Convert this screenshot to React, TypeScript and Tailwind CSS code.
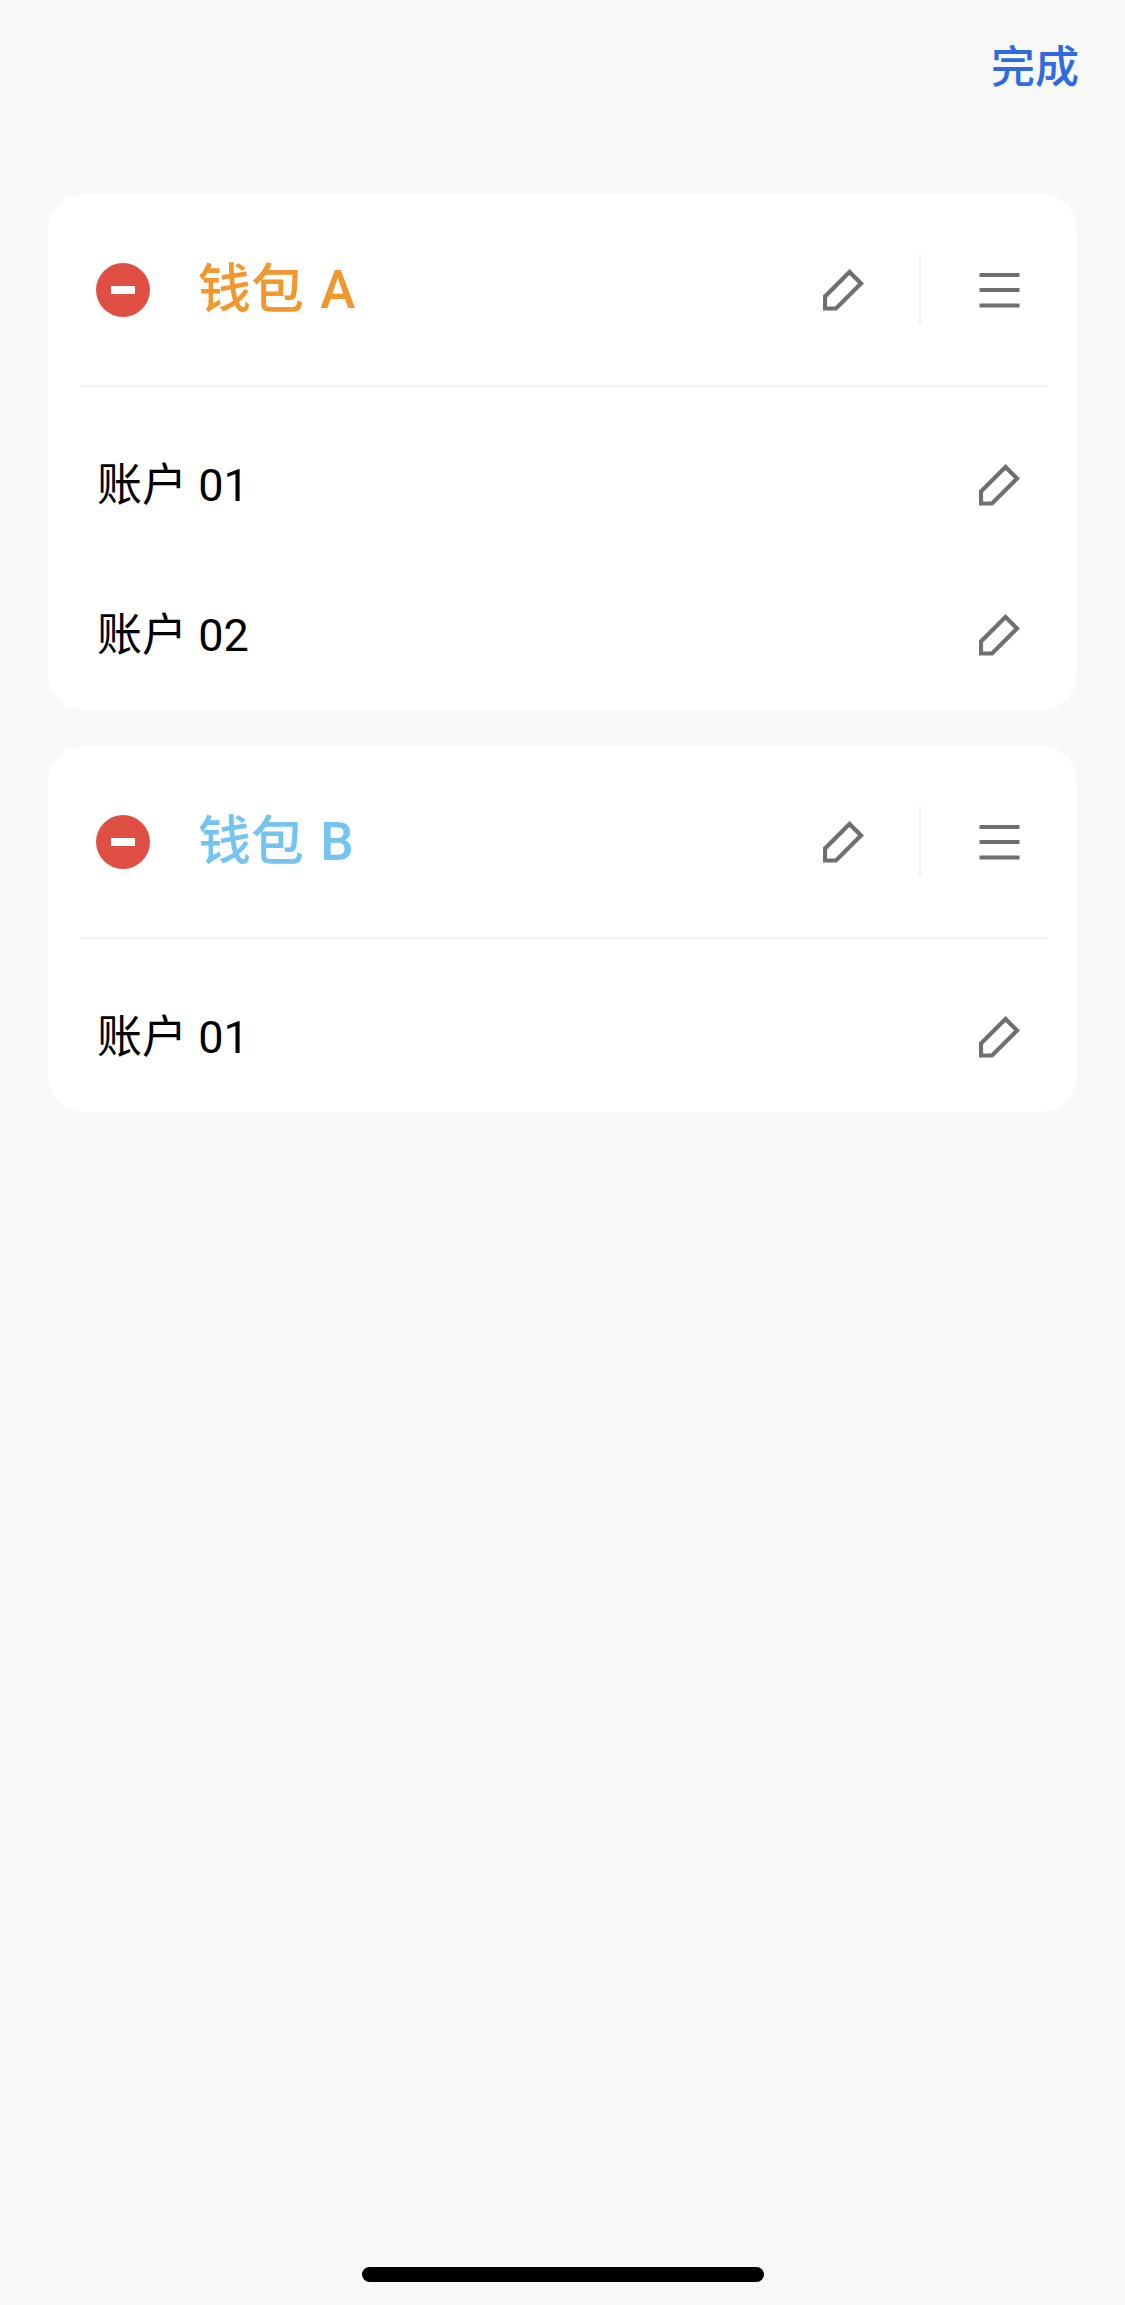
const FONT = "font-['Roboto','Noto_Sans_CJK_SC',sans-serif]";

function Pencil() {
  return (
    <svg width="41" height="42" viewBox="0 0 41 42" fill="none" className="block shrink-0">
      <path d="M2 39.5V27.5L26.5 3L38 14.5L13 39.5Z" stroke="#6f6f6f" strokeWidth="4.2" strokeLinejoin="miter" />
    </svg>
  );
}

function Menu() {
  return (
    <svg width="41" height="36" viewBox="0 0 41 36" fill="none" className="block shrink-0">
      <path d="M0.5 3H40.5M0.5 18H40.5M0.5 33.5H40.5" stroke="#6f6f6f" strokeWidth="4.2" />
    </svg>
  );
}

function Row({ name }: { name: string }) {
  return (
    <div className="flex h-[150px] items-center justify-between pl-[49px] pr-[57px]">
      <span className="text-[45px] leading-none text-black">{name}</span>
      <Pencil />
    </div>
  );
}

function Wallet({ name, color, accounts }: { name: string; color: string; accounts: string[] }) {
  return (
    <section className="mx-[48px] rounded-[36px] bg-white">
      <div className="flex h-[191px] items-center pl-[48px] pr-[57px]">
        <span className="flex size-[54px] shrink-0 items-center justify-center rounded-full bg-[#e04f43]">
          <span className="h-[8px] w-[24px] bg-white" />
        </span>
        <span className={`ml-[48px] flex-1 pt-[2px] text-[53px] font-medium leading-none [word-spacing:3px] ${color}`}>{name}</span>
        <Pencil />
        <span className="ml-[55px] mr-[58px] h-[70px] w-[2px] bg-[#f1f1f1]" />
        <Menu />
      </div>
      <div className="ml-[33px] mr-[29px] h-[2px] bg-[#f1f1f1]" />
      <div className="pt-[23px]">
        {accounts.map((a) => (
          <Row key={a} name={a} />
        ))}
      </div>
    </section>
  );
}

export default function App() {
  return (
    <div className={`flex h-[2305px] flex-col bg-[#f8f8f8] ${FONT}`}>
      <header className="flex h-[194px] items-start justify-end pr-[46px] pt-[46px]">
        <span className="text-[44px] font-medium leading-none text-[#2f6be0]">完成</span>
      </header>
      <main className="flex flex-col gap-[36px]">
        <Wallet name="钱包 A" color="text-[#f2972e]" accounts={["账户 01", "账户 02"]} />
        <Wallet name="钱包 B" color="text-[#74c4f2]" accounts={["账户 01"]} />
      </main>
      <div className="mt-auto mb-[23px] h-[15px] w-[402px] self-center rounded-full bg-black" />
    </div>
  );
}
